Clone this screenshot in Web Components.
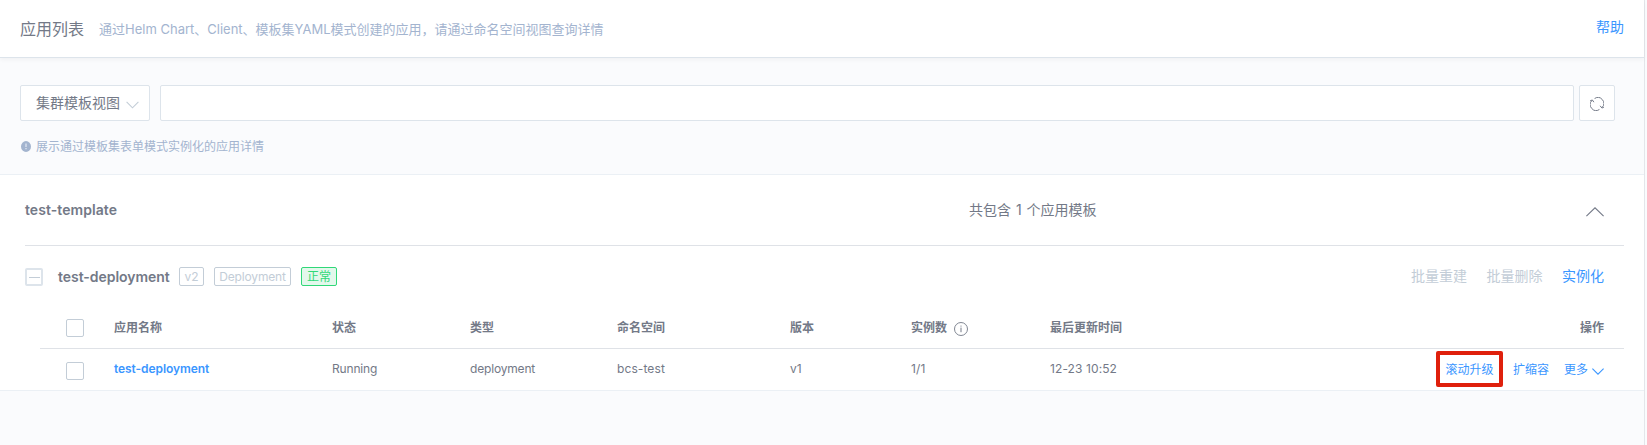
<!DOCTYPE html>
<html lang="zh-CN">
<head>
<meta charset="utf-8">
<title>应用列表</title>
<style>
html,body{margin:0;height:100%;background:#fafbfd}
body{font-family:Inter,"Noto Sans CJK SC",sans-serif;font-size:14px;color:#737987;overflow:hidden}
</style>
</head>
<body>
<app-page></app-page>
<script>
const define = (name, css, html) => customElements.define(name, class extends HTMLElement {
  constructor() {
    super();
    const t = document.createElement('template');
    t.innerHTML = `<style>*{box-sizing:border-box}:host{box-sizing:border-box}svg{display:block;flex:none}${css}</style>${html}`;
    this.attachShadow({mode: 'open'}).append(t.content.cloneNode(true));
  }
});

define('page-header', `
:host{display:flex;align-items:center;height:58px;padding:0 20px;background:#fff;border-bottom:1px solid #dde4eb;box-shadow:0 2px 4px rgba(0,0,0,.04);white-space:nowrap}
.title{font-size:16px;line-height:24px;margin-right:15px}
.sub{font-size:13px;line-height:20px;color:#a3b4cf;flex:1}
.help{color:#3a96ff;line-height:20px;padding-bottom:3px}`,
`<div class="title"><slot name="title"></slot></div><div class="sub"><slot></slot></div><div class="help"><slot name="help"></slot></div>`);

define('view-select', `
:host{display:flex;align-items:center;width:130px;height:36px;background:#fff;border:1px solid #dde4eb;border-radius:2px;padding:0 10px 0 15px;justify-content:space-between;line-height:20px}
svg{margin-top:3px}`,
`<span><slot></slot></span><svg width="13" height="8" viewBox="0 0 13 8" fill="none" stroke="#c3cdd7" stroke-width="1.1"><path d="M.6.9 6.5 6.8 12.4.9"/></svg>`);

define('search-field', `:host{display:block;height:36px;background:#fff;border:1px solid #dde4eb;border-radius:2px;flex:1}`, ``);

define('refresh-button', `
:host{display:flex;align-items:center;justify-content:center;width:36px;height:36px;background:#fff;border:1px solid #dde4eb;border-radius:2px}
svg{margin-top:2px}`,
`<svg width="14" height="14" viewBox="0 0 14 14" fill="none" stroke="#737987" stroke-width="1"><path d="M4.6 1.5A5.9 5.9 0 0 1 12.2 10.4M9.4 12.5A5.9 5.9 0 0 1 1.8 3.6"/><path d="M.2 3.7 2.4 3 3.9 5.2M13.8 10.4 11.9 11 10.1 8.8"/></svg>`);

define('hint-line', `
:host{display:flex;align-items:center;gap:5px;font-size:12px;line-height:18px;color:#a3b4cf;padding-left:1px}
svg{margin-top:1px}
span{margin:1px 0 -1px}`,
`<svg width="10" height="11" viewBox="0 0 10 11"><ellipse cx="5" cy="5.5" rx="5" ry="5.4" fill="#a3b4cf"/><path d="M5 2.6v3.4M5 7v1.2" stroke="#e4eaf3" stroke-width="1.2"/></svg><span><slot></slot></span>`);

define('template-head', `
:host{display:flex;align-items:center;height:71px;border-bottom:1px solid #dfe2e7;line-height:20px}
.name{width:944px;font-weight:600;letter-spacing:.06px}
.count{flex:1;word-spacing:1px}
svg{margin-right:20px;margin-top:3px}`,
`<div class="name"><slot name="name"></slot></div><div class="count"><slot></slot></div>
<svg width="18" height="10" viewBox="0 0 18 10" fill="none" stroke="#737987" stroke-width="1.1"><path d="M.4 9.2 9 .8 17.6 9.2"/></svg>`);

define('status-tag', `
:host{display:flex;justify-content:center;height:19px;line-height:17px;border:1px solid #c3cdd7;border-radius:2px;font-size:12px;color:#c3cdd7;font-weight:400;white-space:nowrap;letter-spacing:-.15px}
:host([kind=version]){width:25px}
:host([kind=type]){width:77px}
:host([kind=ok]){width:36px;letter-spacing:0;color:#30d878;border-color:#30d878;background:#e3f8ec}`,
`<slot></slot>`);

define('deploy-bar', `
:host{display:flex;align-items:center;height:62px;line-height:20px;padding:0 20px 1px 0}
.fold{width:18px;height:18px;border:2px solid #dde4eb;border-radius:2px;margin:1px 15px 0 0;display:flex;align-items:center;justify-content:center}
.fold i{width:11px;height:1px;background:#c3cdd7}
.name{font-weight:600;letter-spacing:-.04px;width:121px;white-space:nowrap}
.tags{display:flex;gap:10px;flex:1}
.ops{display:flex;gap:19.5px;color:#c3cdd7;padding-bottom:2px}
.ops b{font-weight:400;color:#3a96ff}`,
`<div class="fold"><i></i></div><div class="name"><slot name="name"></slot></div><div class="tags"><slot></slot></div>
<div class="ops"><span>批量重建</span><span>批量删除</span><b>实例化</b></div>`);

define('check-box', `:host{display:block;width:18px;height:18px;border:1px solid #c3cdd7;border-radius:2px;background:#fff}`, ``);

define('grid-row', `
:host{display:grid;grid-template-columns:48px 218px 138px 147px 173px 121px 139px 1fr;align-items:center;margin-left:15px;padding:0 20px 0 26px;font-size:12px;line-height:18px;height:42px;white-space:nowrap}
:host([head]){height:41px;font-weight:600;border-bottom:1px solid #dfe2e7}
:host(:not([head])) ::slotted(check-box){margin-top:2px}`,
`<slot></slot>`);

define('info-mark', `:host{display:inline-block;vertical-align:-4px;margin-left:7px}`,
`<svg width="14" height="14" viewBox="0 0 14 14" fill="none" stroke="#737987"><circle cx="7" cy="7" r="6.5" stroke-width=".9"/><path d="M7 3.6v1M7 5.6v4.6" stroke-width="1"/></svg>`);

define('row-actions', `
:host{display:flex;align-items:center;color:#3a96ff;height:36px;margin:-2px 0 0}
span{padding-top:2px}
.hot{width:67px;height:36px;border:4px solid #df200c;border-radius:2px;display:flex;align-items:center;justify-content:center;margin-right:10px}
.more{display:flex;align-items:center;gap:4px;margin-left:15px}
svg{margin-top:3px}`,
`<span class="hot">滚动升级</span><span>扩缩容</span><span class="more">更多<svg width="12" height="7" viewBox="0 0 12 7" fill="none" stroke="#3a96ff" stroke-width="1.1"><path d="M.4.6 6 6.2 11.6.6"/></svg></span>`);

define('app-page', `
:host{display:block;width:1645px;height:445px;border-right:1px solid #e3e6ea}
.tools{display:flex;padding:27px 29px 0 20px}
view-select{margin-right:10px}
search-field{margin-right:5px}
hint-line{margin:16px 20px 19px;}
.panel{background:#fff;border:solid #ebf0f5;border-width:1px 0;height:217px;padding:0 20px 0 25px}
.link{color:#3a96ff;font-weight:600;letter-spacing:-.07px}
.tight{letter-spacing:-.17px}
.loose{letter-spacing:.1px}
.link,.tight,.loose,.plain{padding-bottom:2px}
.last{display:grid;grid-template-columns:1fr auto;align-items:center}`,
`<page-header><span slot="title">应用列表</span>通过Helm Chart、Client、模板集YAML模式创建的应用，请通过命名空间视图查询详情<span slot="help">帮助</span></page-header>
<div class="tools"><view-select>集群模板视图</view-select><search-field></search-field><refresh-button></refresh-button></div>
<hint-line>展示通过模板集表单模式实例化的应用详情</hint-line>
<div class="panel">
<template-head><span slot="name">test-template</span>共包含 1 个应用模板</template-head>
<deploy-bar><span slot="name">test-deployment</span><status-tag kind="version">v2</status-tag><status-tag kind="type">Deployment</status-tag><status-tag kind="ok">正常</status-tag></deploy-bar>
<grid-row head><check-box></check-box><span>应用名称</span><span>状态</span><span>类型</span><span>命名空间</span><span>版本</span><span>实例数<info-mark></info-mark></span><span class="last"><span>最后更新时间</span><span>操作</span></span></grid-row>
<grid-row><check-box></check-box><span class="link">test-deployment</span><span class="tight">Running</span><span class="tight">deployment</span><span class="loose">bcs-test</span><span class="plain">v1</span><span class="loose">1/1</span><span class="last"><span class="loose">12-23 10:52</span><row-actions></row-actions></span></grid-row>
</div>`);
</script>
</body>
</html>
